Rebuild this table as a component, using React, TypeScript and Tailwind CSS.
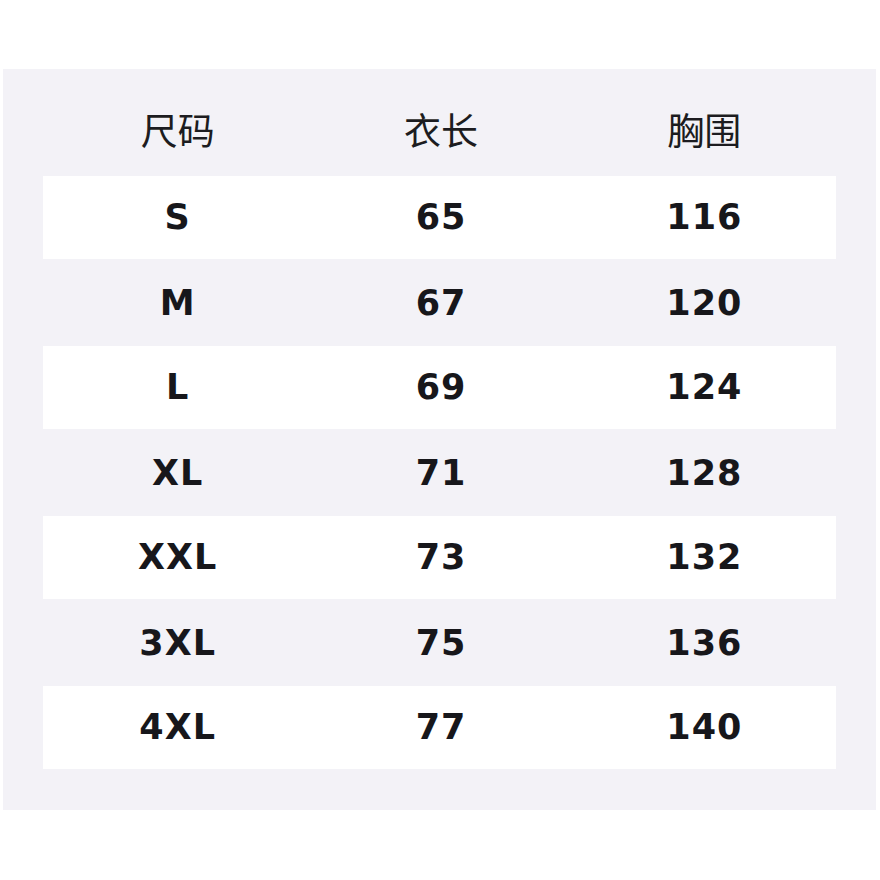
const rows = [
  { size: "S", length: 65, chest: 116 },
  { size: "M", length: 67, chest: 120 },
  { size: "L", length: 69, chest: 124 },
  { size: "XL", length: 71, chest: 128 },
  { size: "XXL", length: 73, chest: 132 },
  { size: "3XL", length: 75, chest: 136 },
  { size: "4XL", length: 77, chest: 140 },
];

export default function App() {
  return (
    <div className="w-[880px] h-[880px] bg-white pt-[69px] pl-[3px]">
      <div className="w-[873px] bg-[#f3f2f7] px-[40px] pt-[22px] pb-[39px]">
        {/* header */}
        <div
          className="grid grid-cols-3 h-[85px] pb-[8px] pl-[3px] items-center text-center text-[37px] text-[#1c1c20]"
          style={{ fontFamily: '"Noto Sans CJK SC", "Noto Sans", sans-serif' }}
        >
          <div>尺码</div>
          <div>衣长</div>
          <div>胸围</div>
        </div>

        {rows.map((r, i) => (
          <div
            key={r.size}
            className={
              i % 2 === 0
                ? "grid grid-cols-3 h-[85px] pl-[3px] items-center text-center bg-white border-b-2 border-[#f3f2f7] text-[35px] tracking-[1px] font-bold text-[#17171b]"
                : "grid grid-cols-3 h-[85px] pl-[3px] items-center text-center text-[35px] tracking-[1px] font-bold text-[#17171b]"
            }
            style={{ fontFamily: '"DejaVu Sans", sans-serif' }}
          >
            <div>{r.size}</div>
            <div>{r.length}</div>
            <div>{r.chest}</div>
          </div>
        ))}
      </div>
    </div>
  );
}
